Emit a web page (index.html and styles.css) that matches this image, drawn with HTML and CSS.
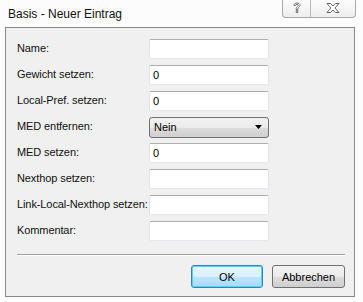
FILE: index.html
```html
<!DOCTYPE html>
<html lang="de">
<head>
    <meta charset="UTF-8">
    <title>Basis - Neuer Eintrag</title>
    <link rel="stylesheet" href="styles.css">
</head>
<body>
    <div class="titlebar">
        <div class="title">Basis - Neuer Eintrag</div>
        <div class="caption-buttons">
            <div class="cap-btn">
                <svg width="10" height="12" viewBox="0 0 10 12">
                    <path d="M2 3.5 C2 1.5 3.5 1 5 1 C6.5 1 8 1.7 8 3.3 C8 5 5.8 5.2 5.8 7 L5.8 7.5 L4.2 7.5 L4.2 6.5 C4.2 4.8 6.3 4.5 6.3 3.3 C6.3 2.6 5.7 2.3 5 2.3 C4.2 2.3 3.6 2.7 3.6 3.5 Z" fill="#fff" stroke="#555" stroke-width="0.8"/>
                    <rect x="4.2" y="8.7" width="1.6" height="1.6" fill="#fff" stroke="#555" stroke-width="0.8"/>
                </svg>
            </div>
            <div class="cap-btn">
                <svg width="14" height="10" viewBox="0 0 14 10">
                    <path d="M1 0.5 H4.5 L7 3 L9.5 0.5 H13 L9 5 L13 9.5 H9.5 L7 7 L4.5 9.5 H1 L5 5 Z" fill="#fff" stroke="#555" stroke-width="0.9"/>
                </svg>
            </div>
        </div>
    </div>

    <div class="frame">
        <div class="form">
            <label>Name:</label>
            <input class="field" type="text" value="">

            <label>Gewicht setzen:</label>
            <input class="field" type="text" value="0">

            <label>Local-Pref. setzen:</label>
            <input class="field" type="text" value="0">

            <label>MED entfernen:</label>
            <div class="select">
                <span>Nein</span>
                <svg width="7" height="4" viewBox="0 0 7 4"><path d="M0 0 H7 L3.5 4 Z" fill="#000"/></svg>
            </div>

            <label>MED setzen:</label>
            <input class="field" type="text" value="0">

            <label>Nexthop setzen:</label>
            <input class="field" type="text" value="">

            <label>Link-Local-Nexthop setzen:</label>
            <input class="field" type="text" value="">

            <label>Kommentar:</label>
            <input class="field" type="text" value="">
        </div>

        <div class="separator"></div>

        <div class="actions">
            <button class="btn default">OK</button>
            <button class="btn">Abbrechen</button>
        </div>
    </div>
</body>
</html>
```

FILE: styles.css
```css
body {
    margin: 0;
    padding: 0;
    width: 363px;
    height: 302px;
    background-color: #fcfcfc;
    font-family: "Liberation Sans", Arial, sans-serif;
    font-size: 11px;
    color: #000;
}

.titlebar {
    display: flex;
    justify-content: space-between;
    align-items: flex-start;
    height: 27px;
    padding: 0 7px 0 8px;
}

.title {
    font-size: 12px;
    padding-top: 7px;
    color: #111;
}

.caption-buttons {
    display: flex;
    margin-top: -1px;
    border: 1px solid #a9a9a9;
    border-top: none;
    border-radius: 0 0 4px 4px;
    background: linear-gradient(#fdfdfd, #eeeeee);
}

.cap-btn {
    display: flex;
    align-items: center;
    justify-content: center;
    height: 18px;
}

.cap-btn:first-child {
    width: 27px;
    border-right: 1px solid #b9b9b9;
}

.cap-btn:last-child {
    width: 44px;
}

.frame {
    margin: 0 8px 0 5px;
    border: 1px solid #888;
    background-color: #f0f0f0;
    padding: 11px 9px 0 11px;
    box-sizing: border-box;
    height: 270px;
}

.form {
    display: grid;
    grid-template-columns: 132px 120px;
    grid-auto-rows: 20px;
    row-gap: 6px;
    align-items: center;
}

.form label {
    padding-bottom: 2px;
    white-space: nowrap;
    letter-spacing: -0.1px;
    color: #111;
}

.field {
    height: 20px;
    box-sizing: border-box;
    margin: 0;
    padding: 0 3px;
    border: 1px solid #e2e3ea;
    border-top-color: #abadb3;
    border-bottom-color: #e3e9ef;
    border-radius: 2px;
    background-color: #fff;
    font-family: "Liberation Sans", Arial, sans-serif;
    font-size: 11px;
    color: #000;
    outline: none;
}

.select {
    display: flex;
    align-items: center;
    justify-content: space-between;
    height: 21px;
    box-sizing: border-box;
    padding: 0 6px 0 4px;
    border: 1px solid #707070;
    border-radius: 3px;
    background: linear-gradient(#f2f2f2 0%, #ebebeb 50%, #dddddd 51%, #cfcfcf 100%);
}

.separator {
    margin-top: 13px;
    height: 1px;
    background-color: #a0a0a0;
    border-bottom: 1px solid #fff;
}

.actions {
    display: flex;
    justify-content: flex-end;
    gap: 9px;
    margin-top: 9px;
}

.btn {
    width: 73px;
    height: 23px;
    margin: 0;
    padding: 0;
    border: 1px solid #707070;
    border-radius: 3px;
    background: linear-gradient(#f2f2f2 0%, #ebebeb 50%, #dddddd 51%, #cfcfcf 100%);
    font-family: "Liberation Sans", Arial, sans-serif;
    font-size: 11px;
    color: #000;
}

.btn.default {
    width: 72px;
    border-color: #3c7fb1;
    box-shadow: inset 0 0 0 1px #48d8fb;
    background: linear-gradient(#eaf6fd 0%, #d9f0fc 50%, #bee6fd 51%, #a7d9f5 100%);
}
```
